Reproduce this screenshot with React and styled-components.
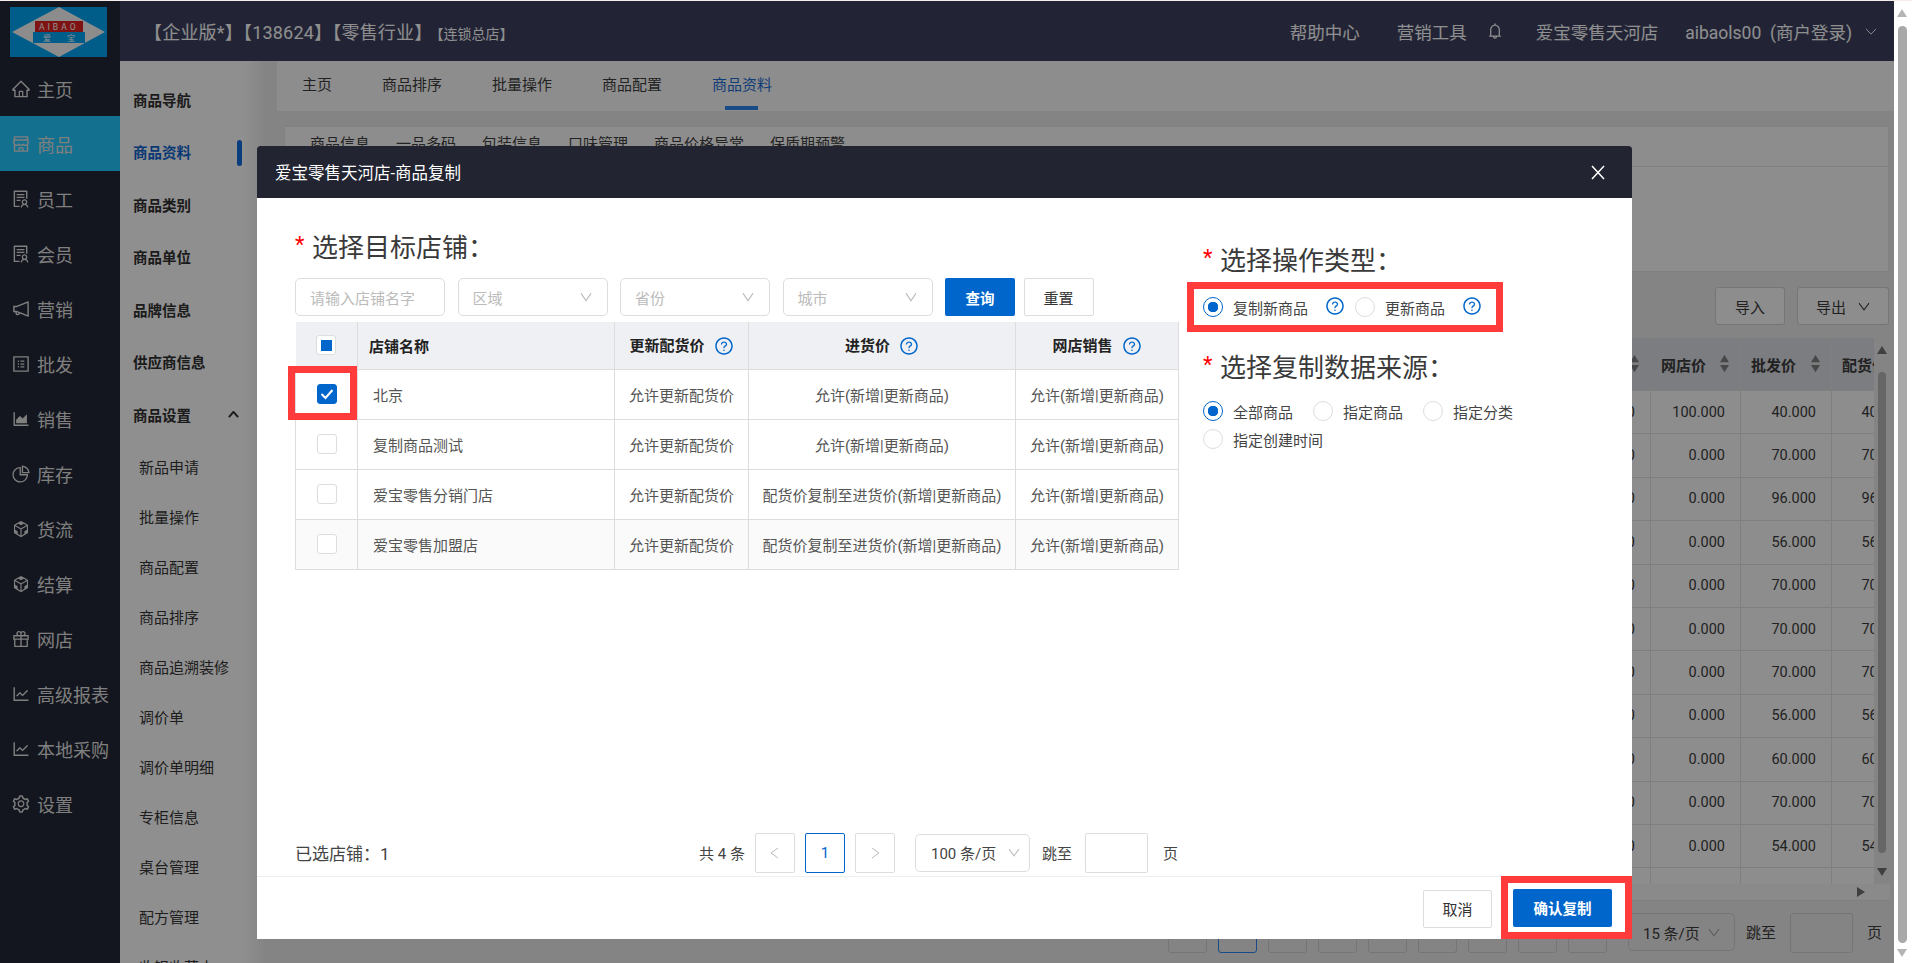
import React from "react";
import styled, { createGlobalStyle } from "styled-components";
import {
  AiOutlineHome,
  AiOutlineShop,
  AiOutlineSolution,
  AiOutlineNotification,
  AiOutlineProfile,
  AiOutlineAreaChart,
  AiOutlinePieChart,
  AiOutlineCodeSandbox,
  AiOutlineGift,
  AiOutlineLineChart,
  AiOutlineSetting,
  AiOutlineBell,
  AiOutlineQuestionCircle,
} from "react-icons/ai";

const FONT = `Roboto, "Noto Sans CJK SC", sans-serif`;

const GlobalStyle = createGlobalStyle`
  html, body {
    margin: 0;
    height: 100%;
    overflow: hidden;
    background: #f6ecea;
    font-family: ${FONT};
  }
  * { box-sizing: border-box; }
`;

const menu = [
  ["主页", AiOutlineHome],
  ["商品", AiOutlineShop, true],
  ["员工", AiOutlineSolution],
  ["会员", AiOutlineSolution],
  ["营销", AiOutlineNotification],
  ["批发", AiOutlineProfile],
  ["销售", AiOutlineAreaChart],
  ["库存", AiOutlinePieChart],
  ["货流", AiOutlineCodeSandbox],
  ["结算", AiOutlineCodeSandbox],
  ["网店", AiOutlineGift],
  ["高级报表", AiOutlineLineChart],
  ["本地采购", AiOutlineLineChart],
  ["设置", AiOutlineSetting],
];

const subTop = ["商品导航", "商品资料", "商品类别", "商品单位", "品牌信息", "供应商信息"];
const subItems = [
  "新品申请", "批量操作", "商品配置", "商品排序", "商品追溯装修", "调价单",
  "调价单明细", "专柜信息", "桌台管理", "配方管理", "收银收藏夹",
];
const topTabs = ["主页", "商品排序", "批量操作", "商品配置", "商品资料"];
const infoTabs = ["商品信息", "一品多码", "包装信息", "口味管理", "商品价格异常", "保质期预警"];

const prices = [
  ["100.000", "40.000"], ["0.000", "70.000"], ["0.000", "96.000"], ["0.000", "56.000"],
  ["0.000", "70.000"], ["0.000", "70.000"], ["0.000", "70.000"], ["0.000", "56.000"],
  ["0.000", "60.000"], ["0.000", "70.000"], ["0.000", "54.000"], ["", ""],
];

const allow = "允许(新增|更新商品)";
const copied = "配货价复制至进货价(新增|更新商品)";
const stores = [
  { name: "北京", cost: allow, checked: true },
  { name: "复制商品测试", cost: allow },
  { name: "爱宝零售分销门店", cost: copied },
  { name: "爱宝零售加盟店", cost: copied, shaded: true },
];

function Chevron({ w = 12, h = 9, color = "#bbb", up, left, right, bold }) {
  const pts = up
    ? "1,7 6,1 11,7"
    : left
    ? "9,1 2,6 9,11"
    : right
    ? "3,1 10,6 3,11"
    : "1,1 6,7 11,1";
  const box = left || right ? "0 0 12 12" : "0 0 12 8";
  return (
    <svg width={w} height={h} viewBox={box} preserveAspectRatio="none" style={{ flex: "none" }}>
      <polyline points={pts} fill="none" stroke={color} strokeWidth={bold ? 2.2 : 1} />
    </svg>
  );
}

function Triangle({ dir = "up", size = 8, color = "#999" }) {
  const pts = { up: "0,8 5,0 10,8", down: "0,0 10,0 5,8", right: "0,0 8,5 0,10" }[dir];
  return (
    <svg width={size + 2} height={size + 2} viewBox="0 0 10 10" style={{ flex: "none", display: "block" }}>
      <polygon points={pts} fill={color} />
    </svg>
  );
}

function Logo() {
  return (
    <svg width="97" height="50" viewBox="0 0 97 50">
      <rect width="97" height="50" fill="#009ce6" />
      <polygon points="2,25 49,0 95,25 49,50" fill="#eaeaea" />
      <rect x="23" y="25" width="52" height="11" fill="#009ce6" />
      <rect x="25" y="14" width="48" height="11" fill="#d42020" />
      <text x="29" y="22.8" fontSize="8.5" letterSpacing="3" fill="#eee" fontFamily={FONT}>AIBAO</text>
      <text x="33" y="34.2" fontSize="8" fill="#eee" fontFamily={FONT}>爱</text>
      <text x="57" y="34.2" fontSize="8" fill="#eee" fontFamily={FONT}>宝</text>
    </svg>
  );
}

function Help({ $gap }) {
  return <HelpIcon $gap={$gap}><AiOutlineQuestionCircle size={20} /></HelpIcon>;
}

export default function App() {
  return (
    <Page>
      <GlobalStyle />
      <Screen>
        <TopBar>
          <LogoCell><Logo /></LogoCell>
          <Edition>
            【企业版*】【138624】【零售行业】<small>【连锁总店】</small>
          </Edition>
          <TopLinks>
            <TopLink $mr={37}>帮助中心</TopLink>
            <TopLink $mr={19}>营销工具</TopLink>
            <BellSlot><AiOutlineBell size={18} /></BellSlot>
            <TopLink $mr={27}>爱宝零售天河店</TopLink>
            <UserLink>aibaols00&nbsp;&nbsp;(商户登录)<Chevron color="#eee" h={7} /></UserLink>
          </TopLinks>
        </TopBar>

        <Body>
          <Sidebar>
            {menu.map(([label, Icon, active]) => (
              <MenuItem key={label} $active={active}>
                <Icon size={20} />
                {label}
              </MenuItem>
            ))}
          </Sidebar>

          <SubNav>
            {subTop.map((t, i) => (
              <SubTop key={t} $active={i === 1}>{t}{i === 1 && <ActiveBar />}</SubTop>
            ))}
            <SubTop>商品设置<Chevron up bold color="#333" w={11} h={7} /></SubTop>
            <SubList>
              {subItems.map((t) => <SubItem key={t}>{t}</SubItem>)}
            </SubList>
          </SubNav>

          <Main>
            <TabBar>
              {topTabs.map((t, i) => <TopTab key={t} $active={i === 4}>{t}</TopTab>)}
            </TabBar>
            <InfoPanel>
              <InfoTabs>
                {infoTabs.map((t) => <InfoTab key={t}>{t}</InfoTab>)}
              </InfoTabs>
            </InfoPanel>
            <Actions>
              <GhostBtn $w={70}>导入</GhostBtn>
              <GhostBtn $w={92}>导出<Chevron color="#333" /></GhostBtn>
            </Actions>
            <Sheet>
              <SheetScroll>
                <SheetRow $head>
                  <SheetCell />
                  <SheetCell $head><Carets /></SheetCell>
                  <SheetCell $head>网店价<Carets /></SheetCell>
                  <SheetCell $head>批发价<Carets /></SheetCell>
                  <SheetCell $head>配货价<Carets /></SheetCell>
                </SheetRow>
                {prices.map(([web, sale], i) => (
                  <SheetRow key={i}>
                    <SheetCell />
                    <SheetCell>{sale && "0.000"}</SheetCell>
                    <SheetCell>{web}</SheetCell>
                    <SheetCell>{sale}</SheetCell>
                    <SheetCell>{sale}</SheetCell>
                  </SheetRow>
                ))}
              </SheetScroll>
              <InnerBar>
                <Triangle color="#6a6a6a" />
                <InnerThumb />
                <Triangle dir="down" color="#6a6a6a" />
              </InnerBar>
            </Sheet>
            <HBar><Triangle dir="right" color="#6a6a6a" /></HBar>
            <BackPager>
              {Array.from({ length: 9 }).map((_, i) => <PageBox key={i} $active={i === 1} />)}
              <BackSize>15 条/页<Chevron color="#999" /></BackSize>
              <span>跳至</span>
              <BackJump />
              <span>页</span>
            </BackPager>
          </Main>
        </Body>

        <Mask>
          <Modal>
            <ModalHead>
              爱宝零售天河店-商品复制
              <svg width="14" height="15" viewBox="0 0 14 15">
                <path d="M1 1 L13 14 M13 1 L1 14" stroke="#fff" strokeWidth="1.5" fill="none" />
              </svg>
            </ModalHead>

            <ModalBody>
              <LeftPane>
                <Heading><Star>*</Star>选择目标店铺：</Heading>
                <Filters>
                  <Field>请输入店铺名字</Field>
                  <Field>区域<Chevron h={10} /></Field>
                  <Field>省份<Chevron h={10} /></Field>
                  <Field>城市<Chevron h={10} /></Field>
                  <Primary $w={70}>查询</Primary>
                  <Plain $w={70}>重置</Plain>
                </Filters>

                <StoreTable>
                  <colgroup>
                    <col width="62" />
                    <col width="257" />
                    <col width="134" />
                    <col width="267" />
                    <col width="163" />
                  </colgroup>
                  <thead>
                    <tr>
                      <Th><Check $partial /></Th>
                      <Th $left>店铺名称</Th>
                      <Th>更新配货价<Help $gap={9} /></Th>
                      <Th>进货价<Help $gap={9} /></Th>
                      <Th>网店销售<Help $gap={9} /></Th>
                    </tr>
                  </thead>
                  <tbody>
                    {stores.map((s) => (
                      <Tr key={s.name} $shaded={s.shaded}>
                        <Td>
                          {s.checked && <CellMark />}
                          <Check $checked={s.checked}>
                            {s.checked && (
                              <svg width="14" height="12" viewBox="0 0 14 12">
                                <polyline points="1.5,6 5.5,10 12.5,2" fill="none" stroke="#fff" strokeWidth="2" />
                              </svg>
                            )}
                          </Check>
                        </Td>
                        <Td $left>{s.name}</Td>
                        <Td>允许更新配货价</Td>
                        <Td>{s.cost}</Td>
                        <Td>{allow}</Td>
                      </Tr>
                    ))}
                  </tbody>
                </StoreTable>

                <PagerRow>
                  <Selected>已选店铺：1</Selected>
                  <Pager>
                    <Total>共 4 条</Total>
                    <PageBtn $w={40} $mr={10}><Chevron left w={12} h={12} /></PageBtn>
                    <PageBtn $w={40} $mr={10} $active>1</PageBtn>
                    <PageBtn $w={40} $mr={20}><Chevron right w={12} h={12} /></PageBtn>
                    <SizeBox>100 条/页<Chevron /></SizeBox>
                    <JumpText>跳至</JumpText>
                    <JumpBox />
                    <JumpText $last>页</JumpText>
                  </Pager>
                </PagerRow>
              </LeftPane>

              <RightPane>
                <Heading><Star $wide>*</Star>选择操作类型：</Heading>
                <RedBox>
                  <Radio $on />
                  <RadioLabel>复制新商品</RadioLabel>
                  <Help $gap={17} />
                  <Radio $gap />
                  <RadioLabel>更新商品</RadioLabel>
                  <Help $gap={17} />
                </RedBox>
                <Heading $second><Star $wide>*</Star>选择复制数据来源：</Heading>
                <SourceGroup>
                  <SourceItem><Radio $on /><RadioLabel>全部商品</RadioLabel></SourceItem>
                  <SourceItem><Radio /><RadioLabel>指定商品</RadioLabel></SourceItem>
                  <SourceItem><Radio /><RadioLabel>指定分类</RadioLabel></SourceItem>
                  <SourceItem><Radio /><RadioLabel>指定创建时间</RadioLabel></SourceItem>
                </SourceGroup>
              </RightPane>
            </ModalBody>

            <ModalFoot>
              <Plain $w={69}>取消</Plain>
              <ConfirmMark>
                <Primary $w={99}>确认复制</Primary>
              </ConfirmMark>
            </ModalFoot>
          </Modal>
        </Mask>
      </Screen>

      <PageBar>
        <Triangle size={8} color="#b5b5b5" />
        <PageThumb />
        <Triangle size={8} dir="down" color="#b5b5b5" />
      </PageBar>
    </Page>
  );
}

function Carets() {
  return (
    <CaretPair>
      <Triangle size={7} color="#777" />
      <Triangle size={7} dir="down" color="#777" />
    </CaretPair>
  );
}

const Page = styled.div`
  display: flex;
  height: 100vh;
  padding-top: 1px;
`;

const Screen = styled.div`
  position: relative;
  flex: 1;
  min-width: 0;
  display: flex;
  flex-direction: column;
  overflow: hidden;
`;

const PageBar = styled.div`
  width: 18px;
  flex: none;
  background: #fff;
  display: flex;
  flex-direction: column;
  align-items: center;
  justify-content: space-between;
  padding: 8px 5px 4px 3px;
`;

const PageThumb = styled.div`
  width: 9px;
  height: 917px;
  border-radius: 5px;
  background: #a9a9a9;
`;

const TopBar = styled.header`
  height: 60px;
  flex: none;
  display: flex;
  align-items: center;
  background: #393c5a;
  color: #eee;
`;

const LogoCell = styled.div`
  width: 120px;
  height: 100%;
  flex: none;
  padding: 6px 0 0 10px;
  background: #212532;
`;

const Edition = styled.div`
  margin-left: 24px;
  font-size: 18px;
  letter-spacing: 0.2px;
  white-space: nowrap;
  small { font-size: 14px; margin-left: 4px; letter-spacing: 0; }
`;

const TopLinks = styled.div`
  margin-left: auto;
  display: flex;
  align-items: center;
  padding-right: 17px;
`;

const TopLink = styled.span`
  font-size: 17.5px;
  margin-right: ${(p) => p.$mr}px;
  white-space: nowrap;
`;

const BellSlot = styled.span`
  display: flex;
  margin-right: 32px;
  color: #eee;
`;

const UserLink = styled.span`
  display: flex;
  align-items: center;
  gap: 13px;
  font-size: 17.5px;
  white-space: nowrap;
`;

const Body = styled.div`
  flex: 1;
  min-height: 0;
  display: flex;
`;

const Sidebar = styled.nav`
  width: 120px;
  flex: none;
  background: #212532;
`;

const MenuItem = styled.div`
  height: 55px;
  display: flex;
  align-items: center;
  gap: 6px;
  padding-left: 11px;
  font-size: 18px;
  color: #d4d4d4;
  background: ${(p) => (p.$active ? "#21bbee" : "transparent")};
`;

const SubNav = styled.div`
  width: 144px;
  flex: none;
  padding-top: 12px;
  background: linear-gradient(to right, #eee 86%, #dedede);
`;

const SubTop = styled.div`
  position: relative;
  height: 52.5px;
  display: flex;
  align-items: center;
  justify-content: space-between;
  padding: 0 25px 0 13px;
  font-size: 14.5px;
  font-weight: 700;
  color: ${(p) => (p.$active ? "#0f5fc4" : "#2e2e2e")};
`;

const ActiveBar = styled.i`
  position: absolute;
  left: 117px;
  top: 14px;
  width: 5px;
  height: 26px;
  border-radius: 3px;
  background: #1166d0;
`;

const SubList = styled.div`
  padding-top: 1px;
`;

const SubItem = styled.div`
  height: 50px;
  display: flex;
  align-items: center;
  padding-left: 19px;
  font-size: 15px;
  color: #333;
`;

const Main = styled.main`
  flex: 1;
  min-width: 0;
  display: flex;
  flex-direction: column;
  background: #dcdcdc;
`;

const TabBar = styled.div`
  height: 50px;
  flex: none;
  margin-left: 13px;
  padding-left: 25px;
  display: flex;
  background: #ececec;
`;

const TopTab = styled.div`
  position: relative;
  height: 50px;
  margin-right: 50px;
  line-height: 48px;
  font-size: 15px;
  color: ${(p) => (p.$active ? "#1a66c8" : "#3a3a3a")};
  &::after {
    content: "";
    display: ${(p) => (p.$active ? "block" : "none")};
    position: absolute;
    left: 13px;
    right: 14px;
    bottom: 1px;
    height: 4px;
    background: #2b7fe0;
  }
`;

const InfoPanel = styled.section`
  height: 146px;
  flex: none;
  margin: 15px 5px 0 20px;
  background: #ebebeb;
  border: 1px solid #d8d8d8;
`;

const InfoTabs = styled.div`
  height: 40px;
  display: flex;
  gap: 26px;
  padding: 5px 0 0 25px;
  border-bottom: 1px solid #d8d8d8;
  font-size: 15px;
  color: #3a3a3a;
`;

const InfoTab = styled.span``;

const Actions = styled.div`
  height: 66px;
  flex: none;
  display: flex;
  justify-content: flex-end;
  align-items: flex-start;
  gap: 12px;
  padding: 15px 5px 0 0;
`;

const GhostBtn = styled.div`
  width: ${(p) => p.$w}px;
  height: 38px;
  display: flex;
  align-items: center;
  justify-content: center;
  gap: 12px;
  border: 1px solid #c4c4c4;
  border-radius: 3px;
  background: #ececec;
  font-size: 15px;
  color: #383838;
`;

const Sheet = styled.div`
  height: 546px;
  flex: none;
  display: flex;
  margin: 0 4px 0 21px;
  overflow: hidden;
`;

const SheetScroll = styled.div`
  flex: 1;
  min-width: 0;
  overflow: hidden;
`;

const SheetRow = styled.div`
  width: 1637px;
  height: ${(p) => (p.$head ? "53px" : "43.4px")};
  display: grid;
  grid-template-columns: 1276px 90px 90px 91px 90px;
  background: ${(p) => (p.$head ? "#cfd0d6" : "#ebebeb")};
  border-bottom: 1px solid #d4d4d4;
`;

const SheetCell = styled.div`
  display: flex;
  align-items: center;
  justify-content: ${(p) => (p.$head ? "space-between" : "flex-end")};
  padding: ${(p) => (p.$head ? "0 11px 0 10px" : "0 15px")};
  border-right: 1px solid #d4d4d4;
  font-size: ${(p) => (p.$head ? "15px" : "14.5px")};
  font-weight: ${(p) => (p.$head ? 700 : 400)};
  color: #383838;
`;

const CaretPair = styled.span`
  margin-left: auto;
  display: flex;
  flex-direction: column;
  gap: 1px;
`;

const InnerBar = styled.div`
  width: 16px;
  flex: none;
  display: flex;
  flex-direction: column;
  align-items: center;
  justify-content: space-between;
  padding: 8px 0 6px;
`;

const InnerThumb = styled.div`
  width: 8px;
  height: 481px;
  border-radius: 4px;
  background: #aaa;
`;

const HBar = styled.div`
  height: 17px;
  flex: none;
  margin: 0 4px 0 21px;
  display: flex;
  align-items: center;
  justify-content: flex-end;
  padding-right: 23px;
  background: #e6e6e6;
  border-bottom: 1px solid #d4d4d4;
`;

const BackPager = styled.div`
  flex: none;
  margin-top: 12px;
  display: flex;
  align-items: flex-start;
  justify-content: flex-end;
  padding-right: 12px;
  font-size: 15px;
  color: #383838;
  span { line-height: 40px; margin-left: 11px; }
  span:last-child { margin-left: 14px; }
`;

const PageBox = styled.div`
  width: 39px;
  height: 40px;
  margin-right: 11px;
  border: 1px solid ${(p) => (p.$active ? "#2b7fe0" : "#c4c4c4")};
  border-radius: 3px;
`;

const BackSize = styled.div`
  width: 107px;
  height: 38px;
  margin-left: 10px;
  padding: 0 14px;
  display: flex;
  align-items: center;
  justify-content: space-between;
  border: 1px solid #c4c4c4;
  border-radius: 5px;
  white-space: nowrap;
`;

const BackJump = styled.div`
  width: 63px;
  height: 40px;
  margin-left: 14px;
  border: 1px solid #c4c4c4;
  border-radius: 3px;
`;

const Mask = styled.div`
  position: absolute;
  inset: 0;
  padding: 145px 0 0 257px;
  background: rgba(0, 0, 0, 0.4);
`;

const Modal = styled.div`
  width: 1375px;
  height: 792.5px;
  display: flex;
  flex-direction: column;
  background: #fff;
  border-radius: 3px 3px 0 0;
  overflow: hidden;
`;

const ModalHead = styled.div`
  height: 52px;
  flex: none;
  display: flex;
  align-items: center;
  justify-content: space-between;
  padding: 0 27px 0 18px;
  background: #222431;
  color: #fff;
  font-size: 16.5px;
  font-weight: 400;
`;

const ModalBody = styled.div`
  flex: 1;
  min-height: 0;
  display: flex;
`;

const LeftPane = styled.div`
  width: 921px;
  flex: none;
  padding: 28px 0 3px 38px;
  display: flex;
  flex-direction: column;
`;

const RightPane = styled.div`
  flex: 1;
  padding: 41px 0 0 9px;
`;

const Heading = styled.div`
  height: 40px;
  padding-bottom: 2px;
  display: flex;
  align-items: center;
  font-size: 26px;
  color: #3a3a3a;
  margin-top: ${(p) => (p.$second ? "14px" : "0")};
`;

const Star = styled.span`
  width: 17px;
  margin-left: ${(p) => (p.$wide ? "16px" : "0")};
  color: #f00;
  font-size: 22px;
  line-height: 1;
`;

const Filters = styled.div`
  margin-top: 12px;
  display: flex;
  gap: 12.5px;
`;

const Field = styled.div`
  width: 150px;
  height: 38px;
  padding: 0 15px 0 14px;
  display: flex;
  align-items: center;
  justify-content: space-between;
  border: 1px solid #ddd;
  border-radius: 5px;
  font-size: 15px;
  color: #bbb;
`;

const Primary = styled.button`
  width: ${(p) => p.$w}px;
  height: 38px;
  padding: 0;
  border: 0;
  border-radius: 2px;
  background: #0066cc;
  color: #fff;
  font: 700 14.5px ${FONT};
`;

const Plain = styled.button`
  width: ${(p) => p.$w}px;
  height: 38px;
  padding: 0;
  margin-left: -4px;
  border: 1px solid #ddd;
  border-radius: 2px;
  background: #fff;
  color: #333;
  font: 400 15px ${FONT};
`;

const StoreTable = styled.table`
  width: 883px;
  margin-top: 6px;
  table-layout: fixed;
  border-collapse: collapse;
  font-size: 15px;
`;

const Th = styled.th`
  height: 47px;
  padding: 0 0 0 ${(p) => (p.$left ? "11px" : "0")};
  background: #eff0f4;
  border-right: 1px solid #ddd;
  font-weight: 700;
  font-size: 15px;
  color: #222;
  text-align: ${(p) => (p.$left ? "left" : "center")};
  white-space: nowrap;
`;

const Tr = styled.tr`
  background: ${(p) => (p.$shaded ? "#fafafa" : "#fff")};
`;

const Td = styled.td`
  position: relative;
  height: 50px;
  padding: 0 0 0 ${(p) => (p.$left ? "15px" : "0")};
  border: 1px solid #ddd;
  text-align: ${(p) => (p.$left ? "left" : "center")};
  color: #555;
  white-space: nowrap;
`;

const Check = styled.span`
  display: inline-flex;
  align-items: center;
  justify-content: center;
  vertical-align: middle;
  width: 20px;
  height: 20px;
  border-radius: 3px;
  border: 1px solid ${(p) => (p.$checked ? "#0066cc" : "#ddd")};
  background: ${(p) => (p.$checked ? "#0066cc" : "#fff")};
  &::before {
    content: "";
    display: ${(p) => (p.$partial ? "block" : "none")};
    width: 11px;
    height: 11px;
    background: #0066cc;
  }
`;

const CellMark = styled.i`
  position: absolute;
  left: -8px;
  top: -4px;
  width: 69px;
  height: 54px;
  border: 7px solid #ff3b3b;
`;

const HelpIcon = styled.span`
  display: inline-flex;
  vertical-align: middle;
  color: #0066cc;
  margin-left: ${(p) => p.$gap}px;
  margin-top: -2px;
`;

const PagerRow = styled.div`
  margin-top: auto;
  display: flex;
  align-items: center;
  justify-content: space-between;
  width: 883px;
`;

const Selected = styled.div`
  font-size: 17px;
  color: #444;
`;

const Pager = styled.div`
  display: flex;
  align-items: center;
  font-size: 15px;
  color: #444;
`;

const Total = styled.span`
  margin-right: 10px;
`;

const PageBtn = styled.div`
  width: ${(p) => p.$w}px;
  height: 40px;
  margin-right: ${(p) => p.$mr}px;
  display: flex;
  align-items: center;
  justify-content: center;
  border: 1px solid ${(p) => (p.$active ? "#0066cc" : "#ddd")};
  border-radius: 2px;
  color: #0066cc;
`;

const SizeBox = styled.div`
  width: 115px;
  height: 38px;
  padding: 0 9px 0 15px;
  display: flex;
  align-items: center;
  justify-content: space-between;
  border: 1px solid #ddd;
  border-radius: 5px;
  white-space: nowrap;
`;

const JumpText = styled.span`
  margin: ${(p) => (p.$last ? "0 0 0 15px" : "0 13px 0 12px")};
`;

const JumpBox = styled.div`
  width: 63px;
  height: 40px;
  border: 1px solid #ddd;
  border-radius: 2px;
`;

const RedBox = styled.div`
  width: 316px;
  height: 50px;
  margin-top: 3px;
  padding-left: 9px;
  display: flex;
  align-items: center;
  border: 7px solid #ff3b3b;
`;

const Radio = styled.i`
  flex: none;
  width: 20px;
  height: 20px;
  margin-left: ${(p) => (p.$gap ? "10px" : "0")};
  border-radius: 50%;
  border: 1px solid ${(p) => (p.$on ? "#0066cc" : "#ddd")};
  background: ${(p) => (p.$on ? "radial-gradient(circle, #0066cc 0 5px, #fff 5.5px)" : "#fff")};
`;

const RadioLabel = styled.span`
  margin-left: 10px;
  font-size: 15px;
  color: #444;
  white-space: nowrap;
`;

const SourceGroup = styled.div`
  width: 330px;
  margin-top: 11px;
  margin-left: 16px;
  display: flex;
  flex-wrap: wrap;
`;

const SourceItem = styled.label`
  width: 110px;
  height: 28px;
  display: flex;
  align-items: center;
  &:last-child { width: 200px; }
`;

const ModalFoot = styled.div`
  height: 63px;
  flex: none;
  display: flex;
  align-items: flex-start;
  justify-content: flex-end;
  border-top: 1px solid #eee;
  padding-top: 13px;
  position: relative;
  padding-right: 7px;
  ${Plain} { margin-right: 24px; }
`;

const ConfirmMark = styled.div`
  width: 131px;
  height: 63px;
  margin: -14px -7px 0 -15px;
  padding: 6px 5px;
  border: 7px solid #ff3b3b;
`;
